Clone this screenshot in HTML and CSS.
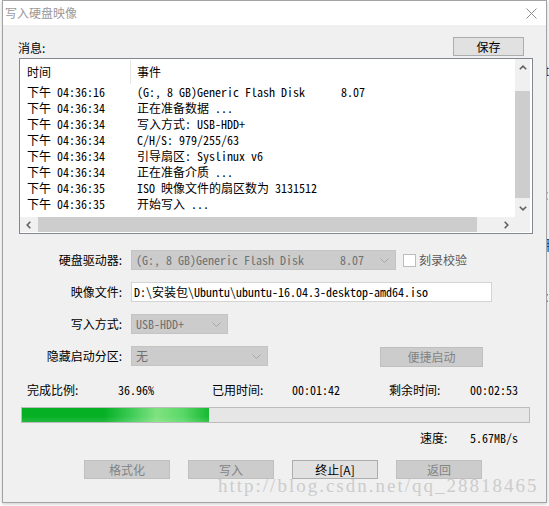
FILE: index.html
```html
<!DOCTYPE html>
<html lang="zh-CN">
<head>
<meta charset="utf-8">
<title>写入硬盘映像</title>
<link rel="stylesheet" href="styles.css">
</head>
<body>
<div class="dialog">
  <div class="titlebar">
    <span class="title">写入硬盘映像</span>
    <svg class="close" width="11" height="11" viewBox="0 0 11 11"><path d="M0.5 0.5L10.5 10.5M10.5 0.5L0.5 10.5" stroke="#8c8c8c" stroke-width="1" fill="none"/></svg>
  </div>
  <div class="content">
    <div class="msg-head">
      <span class="msg-label">消息:</span>
      <div class="btn save">保存</div>
    </div>
    <div class="listbox">
      <div class="list-area">
        <div class="list-header"><span class="h-time">时间</span><span class="h-event">事件</span></div>
        <div class="row"><span class="c-time">下午 04:36:16</span><span class="c-event">(G:, 8 GB)Generic Flash Disk      8.07</span></div>
        <div class="row"><span class="c-time">下午 04:36:34</span><span class="c-event">正在准备数据 ...</span></div>
        <div class="row"><span class="c-time">下午 04:36:34</span><span class="c-event">写入方式: USB-HDD+</span></div>
        <div class="row"><span class="c-time">下午 04:36:34</span><span class="c-event">C/H/S: 979/255/63</span></div>
        <div class="row"><span class="c-time">下午 04:36:34</span><span class="c-event">引导扇区: Syslinux v6</span></div>
        <div class="row"><span class="c-time">下午 04:36:34</span><span class="c-event">正在准备介质 ...</span></div>
        <div class="row"><span class="c-time">下午 04:36:35</span><span class="c-event">ISO 映像文件的扇区数为 3131512</span></div>
        <div class="row"><span class="c-time">下午 04:36:35</span><span class="c-event">开始写入 ...</span></div>
      </div>
      <div class="vscroll">
        <div class="sb-btn"><svg width="8" height="5" viewBox="0 0 8 5"><path d="M0.8 4.3L4 1.2L7.2 4.3" stroke="#606060" stroke-width="1.6" fill="none"/></svg></div>
        <div class="vtrack"><div class="vthumb"></div></div>
        <div class="sb-btn"><svg width="8" height="5" viewBox="0 0 8 5"><path d="M0.8 0.7L4 3.8L7.2 0.7" stroke="#606060" stroke-width="1.6" fill="none"/></svg></div>
      </div>
      <div class="hscroll">
        <div class="sb-btn h"><svg width="5" height="8" viewBox="0 0 5 8"><path d="M4.3 0.8L1.2 4L4.3 7.2" stroke="#606060" stroke-width="1.6" fill="none"/></svg></div>
        <div class="hthumb"></div>
        <div class="htrack"></div>
        <div class="sb-btn h"><svg width="5" height="8" viewBox="0 0 5 8"><path d="M0.7 0.8L3.8 4L0.7 7.2" stroke="#606060" stroke-width="1.6" fill="none"/></svg></div>
      </div>
      <div class="corner"></div>
    </div>

    <div class="form">
      <div class="frow">
        <span class="flabel">硬盘驱动器:</span>
        <div class="combo w-drive"><span class="mono">(G:, 8 GB)Generic Flash Disk      8.07</span><svg width="9" height="5" viewBox="0 0 9 5"><path d="M0.5 0.5L4.5 4.5L8.5 0.5" stroke="#a6a6a6" fill="none"/></svg></div>
        <span class="check"></span>
        <span class="check-label">刻录校验</span>
      </div>
      <div class="frow">
        <span class="flabel">映像文件:</span>
        <div class="input mono">D:\安装包\Ubuntu\ubuntu-16.04.3-desktop-amd64.iso</div>
      </div>
      <div class="frow">
        <span class="flabel">写入方式:</span>
        <div class="combo w-mode"><span class="mono">USB-HDD+</span><svg width="9" height="5" viewBox="0 0 9 5"><path d="M0.5 0.5L4.5 4.5L8.5 0.5" stroke="#a6a6a6" fill="none"/></svg></div>
      </div>
      <div class="frow">
        <span class="flabel">隐藏启动分区:</span>
        <div class="combo w-hide"><span class="mono">无</span><svg width="9" height="5" viewBox="0 0 9 5"><path d="M0.5 0.5L4.5 4.5L8.5 0.5" stroke="#a6a6a6" fill="none"/></svg></div>
        <div class="btn disabled quick">便捷启动</div>
      </div>
    </div>

    <div class="stats">
      <span>完成比例:</span><span class="mono">36.96%</span>
      <span>已用时间:</span><span class="mono">00:01:42</span>
      <span>剩余时间:</span><span class="mono">00:02:53</span>
    </div>

    <div class="progress"><div class="fill" style="width: 36.96%"></div></div>

    <div class="speed"><span class="speed-label">速度:</span><span class="mono">5.67MB/s</span></div>

    <div class="actions">
      <div class="btn disabled act">格式化</div>
      <div class="btn disabled act">写入</div>
      <div class="btn act">终止[A]</div>
      <div class="btn disabled act">返回</div>
    </div>
  </div>
  <div class="watermark">http://blog.csdn.net/qq_28818465</div>
</div>
<div class="bg-strip">
  <span class="frag frag-t">t</span>
  <span class="frag frag-a">:</span>
  <span class="frag frag-b">甲</span>
  <span class="frag frag-c">:</span>
</div>
</body>
</html>
```

FILE: styles.css
```css
* { box-sizing: border-box; margin: 0; padding: 0; }

html, body {
  width: 549px;
  height: 506px;
  overflow: hidden;
}

body {
  background: #ffffff;
  font-family: "Noto Sans CJK SC", "Microsoft YaHei", sans-serif;
  font-size: 12px;
  color: #000;
  display: flex;
  align-items: flex-start;
}

.mono {
  font-family: "Noto Sans Mono CJK SC", "Noto Sans CJK SC", monospace;
  white-space: pre;
}

.dialog {
  margin-left: 2px;
  width: 545px;
  height: 503px;
  flex: none;
  border: 1px solid #a3a3a3;
  background: #f0f0f0;
  position: relative;
  display: flex;
  flex-direction: column;
  box-shadow: 0 1px 4px rgba(0, 0, 0, 0.22);
}

.titlebar {
  height: 24px;
  background: #fff;
  display: flex;
  align-items: center;
  justify-content: space-between;
  padding: 0 9px 0 2px;
}

.title {
  color: #9a9a9a;
  font-size: 12px;
  line-height: 16px;
}

.close { display: block; }

.content {
  padding: 12px 13px 0 16px;
  display: flex;
  flex-direction: column;
}

.msg-head {
  height: 19px;
  display: flex;
  align-items: flex-start;
  justify-content: space-between;
}

.msg-label {
  margin-left: -1px;
  padding-top: 3px;
  line-height: 16px;
}

.btn {
  border: 1px solid #adadad;
  background: #e1e1e1;
  color: #000;
  font-size: 12px;
  line-height: 17px;
  text-align: center;
  height: 19px;
}

.btn.disabled {
  background: #cccccc;
  border-color: #bfbfbf;
  color: #838383;
}

.save {
  width: 71px;
  margin-right: 9px;
}

/* list view */
.listbox {
  margin-top: 2px;
  height: 176px;
  border: 1px solid #828790;
  background: #fff;
  padding: 0 2px 1px 0;
  display: grid;
  grid-template-columns: 1fr 15px;
  grid-template-rows: 1fr 15px;
}

.list-area {
  overflow: hidden;
  font-family: "Noto Sans Mono CJK SC", "Noto Sans CJK SC", monospace;
}

.list-header {
  height: 25px;
  display: flex;
  font-family: "Noto Sans CJK SC", sans-serif;
}

.h-time {
  width: 111px;
  padding-left: 7px;
  border-right: 1px solid #e5e5e5;
  height: 24px;
  margin-top: 1px;
  line-height: 24px;
}

.h-event {
  padding-left: 6px;
  line-height: 25px;
}

.row {
  height: 16px;
  line-height: 16px;
  display: flex;
}

.c-time {
  width: 110px;
  flex: none;
  padding-left: 7px;
  white-space: pre;
}

.c-event {
  padding-left: 7px;
  white-space: pre;
}

.vscroll {
  background: #f0f0f0;
  display: flex;
  flex-direction: column;
}

.sb-btn {
  height: 17px;
  flex: none;
  display: flex;
  align-items: center;
  justify-content: center;
}

.sb-btn svg { display: block; }

.vtrack { flex: 1; }

.vthumb {
  margin-top: 15px;
  height: 107px;
  background: #cdcdcd;
}

.hscroll {
  background: #f0f0f0;
  display: flex;
}

.sb-btn.h {
  width: 17px;
  height: 15px;
}

.hthumb {
  margin-left: 1px;
  width: 439px;
  background: #cdcdcd;
}

.htrack { flex: 1; }

.corner { background: #f0f0f0; }

/* form */
.form {
  margin-top: 16px;
  display: flex;
  flex-direction: column;
  gap: 12px;
}

.frow {
  height: 20px;
  display: flex;
  align-items: center;
}

.flabel {
  width: 103px;
  flex: none;
  margin-right: 9px;
  text-align: right;
  line-height: 16px;
}

.combo {
  height: 20px;
  flex: none;
  border: 1px solid #c4c4c4;
  background: #cccccc;
  color: #707070;
  display: flex;
  align-items: center;
  justify-content: space-between;
  padding: 0 6px 0 4px;
  line-height: 16px;
}

.combo svg { display: block; }

.w-drive { width: 265px; }
.w-mode { width: 97px; }
.w-hide { width: 137px; }

.check {
  width: 13px;
  height: 13px;
  flex: none;
  margin-left: 7px;
  border: 1px solid #bcbcbc;
  background: #fff;
}

.check-label {
  margin-left: 3px;
  color: #5a5a5a;
  line-height: 16px;
}

.input {
  width: 361px;
  height: 20px;
  border: 1px solid #d4d4d4;
  background: #fff;
  padding-left: 2px;
  line-height: 18px;
}

.quick {
  width: 103px;
  height: 20px;
  flex: none;
  margin-left: 112px;
  margin-top: 2px;
  line-height: 18px;
}

/* progress */
.stats {
  margin-top: 16px;
  height: 16px;
  line-height: 16px;
  padding-left: 8px;
  display: grid;
  grid-template-columns: 91px 94px 80px 97px 81px auto;
}

.progress {
  margin: 9px 0 0 2px;
  width: 509px;
  height: 16px;
  border: 1px solid #bcbcbc;
  background: #e6e6e6;
}

.fill {
  height: 100%;
  background:
    linear-gradient(180deg, rgba(255,255,255,0) 60%, rgba(255,255,255,0.12) 100%),
    linear-gradient(90deg, #06b025 0%, #06b025 44%, #3ccb55 58%, #7fe27f 72%, #5ad868 86%, #16b933 100%);
}

.speed {
  margin-top: 7px;
  height: 16px;
  line-height: 16px;
  display: flex;
  padding-left: 401px;
}

.speed-label { width: 50px; }

.actions {
  margin-top: 14px;
  display: flex;
  gap: 18px;
  padding-left: 65px;
}

.act { width: 86px; }

.watermark {
  position: absolute;
  left: 215px;
  top: 478px;
  font-family: "Liberation Serif", serif;
  font-size: 19px;
  line-height: 14px;
  letter-spacing: 2px;
  color: #cccccc;
  white-space: nowrap;
}

/* desktop behind the dialog */
.bg-strip {
  width: 2px;
  height: 506px;
  overflow: hidden;
  display: flex;
  flex-direction: column;
  flex: none;
}

.frag {
  display: block;
  margin-left: -2px;
  font-family: "Liberation Sans", sans-serif;
  font-size: 14px;
  line-height: 14px;
  height: 14px;
}

.frag-t { margin-top: 64px; color: #333; }
.frag-a { margin-top: 110px; color: #d08040; }
.frag-b { margin-top: 36px; color: #2050a0; margin-left: -6px; }
.frag-c { margin-top: 38px; color: #4060c0; }
```
